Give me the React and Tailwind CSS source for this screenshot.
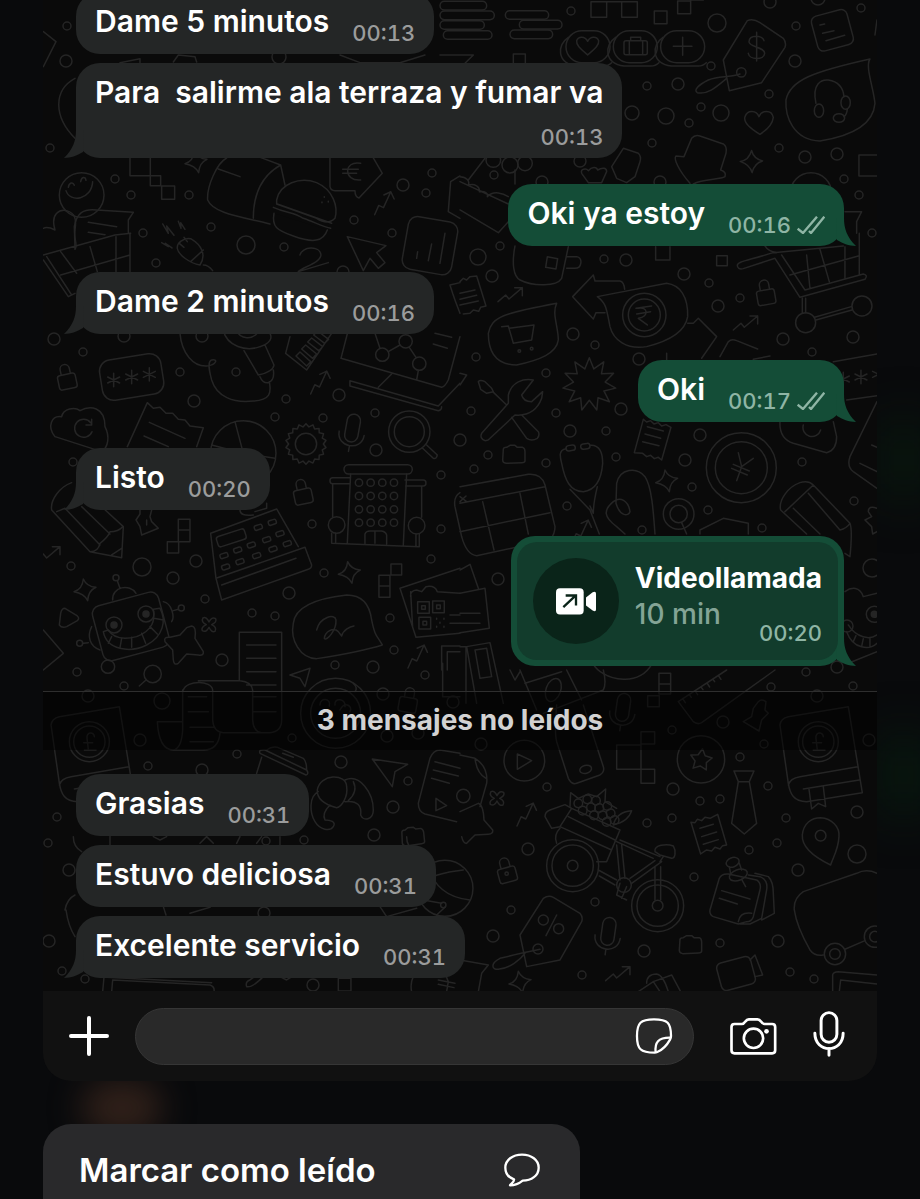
import { clsx } from 'clsx';

const messages = [
  { id: 1, text: 'Dame 5 minutos', time: '00:13' },
  { id: 2, text: 'Para  salirme ala terraza y fumar va', time: '00:13', stacked: true, tail: true },
  { id: 3, text: 'Oki ya estoy', time: '00:16', mine: true, tail: true },
  { id: 4, text: 'Dame 2 minutos', time: '00:16', tail: true },
  { id: 5, text: 'Oki', time: '00:17', mine: true, tail: true },
  { id: 6, text: 'Listo', time: '00:20', tail: true },
];

const unread = [
  { id: 7, text: 'Grasias', time: '00:31' },
  { id: 8, text: 'Estuvo deliciosa', time: '00:31' },
  { id: 9, text: 'Excelente servicio', time: '00:31', tail: true },
];

// x, y, radius
const dots = [
  [67, 26, 4], [66, 61, 6], [50, 148, 4], [115, 179, 4], [131, 195, 4], [189, 195, 4], [211, 227, 4], [246, 245, 9],
  [284, 247, 4], [143, 233, 4], [156, 263, 4], [432, 173, 4], [403, 185, 6], [426, 193, 4], [354, 220, 4], [392, 233, 4],
  [279, 57, 7], [343, 272, 6], [571, 11, 4], [717, 23, 9], [796, 26, 4], [861, 8, 4], [770, 2, 6], [818, -2, 7],
  [795, 61, 6], [711, 66, 4], [678, 84, 6], [647, 86, 4], [769, 94, 4], [701, 107, 4], [666, 116, 8], [721, 113, 8],
  [632, 113, 7], [689, 123, 4], [652, 143, 4], [805, 157, 6], [837, 154, 6], [779, 148, 4], [844, 179, 4], [859, 195, 4],
  [872, 233, 4], [494, 175, 4], [580, 161, 6], [542, 182, 6], [660, 182, 6], [500, 246, 4], [478, 257, 8], [492, 276, 6],
  [604, 259, 4], [626, 260, 6], [684, 274, 6], [709, 283, 4], [740, 298, 4], [718, 306, 6], [573, 334, 6], [783, 339, 6],
  [853, 337, 6], [54, 339, 6], [83, 352, 4], [124, 336, 6], [202, 336, 6], [180, 372, 4], [236, 372, 4], [194, 401, 6],
  [286, 399, 4], [275, 417, 4], [323, 418, 4], [339, 395, 6], [375, 413, 4], [376, 450, 6], [441, 475, 4], [73, 462, 4],
  [312, 524, 4], [441, 529, 4], [431, 559, 4], [324, 573, 4], [71, 566, 4], [142, 567, 9], [173, 578, 6], [196, 561, 6],
  [205, 599, 4], [289, 593, 6], [252, 613, 4], [275, 616, 4], [222, 660, 6], [390, 618, 4], [394, 650, 4], [335, 665, 4],
  [373, 667, 6], [595, 345, 4], [812, 352, 4], [476, 357, 4], [546, 373, 4], [639, 359, 6], [471, 411, 4], [556, 413, 4],
  [621, 409, 6], [570, 431, 6], [606, 431, 4], [460, 440, 6], [488, 455, 4], [474, 469, 4], [546, 463, 4], [616, 457, 4],
  [685, 460, 6], [700, 435, 6], [692, 487, 4], [708, 510, 4], [762, 528, 4], [802, 462, 4], [854, 501, 4], [567, 506, 4],
  [642, 530, 4], [498, 579, 6], [872, 568, 9], [847, 626, 6], [837, 667, 6], [806, 672, 4], [77, 672, 4], [124, 686, 4],
  [88, 696, 6], [162, 701, 8], [425, 675, 4], [383, 694, 6], [140, 740, 6], [292, 738, 4], [387, 736, 6], [418, 733, 6],
  [453, 702, 6], [237, 754, 4], [148, 766, 4], [202, 770, 6], [341, 762, 6], [408, 781, 4], [393, 807, 6], [374, 835, 6],
  [304, 840, 4], [266, 841, 4], [57, 817, 4], [48, 843, 4], [69, 870, 6], [49, 941, 6], [62, 971, 4], [85, 979, 4],
  [313, 985, 6], [264, 913, 6], [771, 687, 4], [853, 686, 4], [817, 696, 6], [723, 722, 6], [672, 730, 4], [764, 744, 4],
  [869, 740, 6], [481, 744, 6], [740, 757, 4], [768, 786, 4], [673, 789, 6], [700, 801, 4], [720, 799, 4], [547, 787, 4],
  [786, 818, 4], [672, 818, 4], [647, 823, 4], [857, 812, 6], [777, 843, 4], [749, 850, 4], [857, 854, 9], [798, 870, 6],
  [528, 849, 6], [694, 877, 4], [595, 902, 4], [511, 910, 4], [493, 936, 6], [644, 951, 6], [720, 943, 4], [778, 941, 6],
  [582, 975, 4], [790, 972, 4], [814, 979, 4],
];

const shapes = {
  sparkle: 'M-5-33Q5-10 33-8Q10 2 8 32Q-2 10-33 5Q-8-2-5-33Z',
  lock: 'M-19-12H19Q27-12 27-4V24Q27 32 19 32H-19Q-27 32-27 24V-4Q-27-12-19-12ZM-14-12V-28A14 14 0 0 1 14-28V-12',
  zig: 'M-38 20L-15 0L-5 12L35-22M12-22H35V2',
  mic: 'M-20-38A20 20 0 0 1 20-38V6A20 20 0 0 1-20 6ZM-38 0C-38 50 38 50 38 0M0 38V55',
  clover: 'M0-8Q8-25 20-18Q25-8 8 0Q25 8 18 20Q8 25 0 8Q-8 25-20 18Q-25 8-8 0Q-25-8-18-20Q-8-25 0-8Z',
  asterisk: 'M0-20V20M-18-9L18 9M-18 9L18-9',
  folder: 'M-30-14Q-30-20-20-20L-10-26H5L12-20H28Q35-17 35-7V20Q35 26 25 26L-22 28Q-32 26-32 18Z',
};

function Shape({ name, x, y, r = 0 }) {
  return <path d={shapes[name]} transform={`translate(${x} ${y}) rotate(${r})`} />;
}

function Star({ x, y, points, outer, inner, r = 0 }) {
  const coords = Array.from({ length: points * 2 }, (_, i) => {
    const radius = i % 2 ? inner : outer;
    const a = (Math.PI * i) / points + (r * Math.PI) / 180;
    return `${(x + radius * Math.sin(a)).toFixed(1)},${(y - radius * Math.cos(a)).toFixed(1)}`;
  });
  return <polygon points={coords.join(' ')} />;
}

function Circles({ list }) {
  return list.map(([x, y, r]) => <circle key={`${x}-${y}-${r}`} cx={x} cy={y} r={r} />);
}

function Book() {
  return (
    <>
      <path d="M960 165Q962 145 985 140L1165 110L1207 368L1040 395C1000 395 990 370 985 340L960 165M985 345Q990 325 1020 320L1193 290M1030 357L1198 330M1047 357L1055 417L1075 400L1097 410L1090 350" />
      <path d="M1090 200C1090 185 1065 185 1068 205L1072 240H1060H1095M1058 218H1085" />
      <Circles list={[[1075, 215, 60], [1075, 215, 47]]} />
    </>
  );
}

function Wallpaper() {
  return (
    <svg
      className="absolute inset-0 h-full w-full"
      viewBox="43 0 834 992"
      preserveAspectRatio="xMidYMin slice"
      fill="none"
      stroke="#252525"
      strokeLinecap="round"
      strokeLinejoin="round"
      aria-hidden="true"
    >
      <g strokeWidth="1.5">
        <Circles list={dots} />
      </g>

      {/* top left */}
      <g transform="translate(40 0) scale(.3333)" strokeWidth="4.5">
        <path d="M105 235C40 270 40 350 105 415M10 95L48 125L10 200M900 165L960 188H1080L1155 165M400 186L415 165L465 170L470 186M240 188L300 176V188" />
        <circle cx="125" cy="585" r="67" />
        <path d="M78 572C90 610 155 600 158 545M85 562c2-14 14-18 18-6M122 545c2-14 14-18 16-4" />
        <path d="M10 685C20 680 35 685 45 690C30 640 60 628 80 632C105 640 110 655 105 690C100 720 115 735 105 748" />
        <path d="M270 474V527H331V474M331 527H362V557H331ZM365 558H404V598H365Z" />
        <Shape name="sparkle" x={468} y={486} />
        <path d="M560 474C530 490 500 560 503 600C520 640 600 650 690 672M640 655C640 590 660 530 722 495L735 555M655 470L722 495M535 507L600 530" />
        <path d="M710 600C720 550 780 530 830 548C880 570 895 620 885 655C870 670 850 668 830 655L710 612ZM700 622C740 640 760 635 790 655C820 665 850 680 872 685M712 612L875 670M702 640C695 680 710 690 760 708C820 730 850 725 862 690M853 590v2M846 606v2M865 604v2" fill="#0a0a0a" />
        <path d="M870 474V560Q872 572 885 572H945Q945 590 957 594L1027 520L1000 474M962 490C910 480 910 545 962 540M908 508H955M908 520H950" />
        <path d="M922 710L1038 737L1010 758L1035 788L1015 805L990 775L970 812Z" />
        <Shape name="zig" x={1030} y={610} r={-25} />
        <path d="M412 745C410 730 430 712 452 716C485 735 500 765 480 795C450 790 415 765 412 745M452 785L490 750M418 730L432 742M432 712L442 725M490 795Q505 795 518 812" />
        <path d="M368 672L385 700L380 678L402 706M415 664L423 685L422 668L435 688M365 728L385 740L376 730L396 744" />
        <path d="M10 765L225 705L272 700M10 780L85 890L105 880M20 770L95 885M270 700V815M228 710V815M62 755L110 820M150 740L172 815M62 825L270 765M105 745L103 680C110 640 130 625 170 630L280 637L265 660V700M145 667L230 680M145 697L195 704" />
        <path d="M780 765C785 740 840 735 843 765C840 790 790 800 775 815L865 788" />
        <rect x="1095" y="657" width="150" height="160" rx="28" transform="rotate(10 1170 737)" />
        <path d="M1130 775l3-20M1165 782l10-50M1200 790l15-90M1260 528L1232 545L1225 635L1260 655M1260 848L1230 855L1238 880L1245 900L1260 940" />
      </g>

      {/* top right */}
      <g transform="translate(460 0) scale(.3333)" strokeWidth="4.5">
        <rect x="-60" y="4" width="140" height="26" rx="13" />
        <rect x="-60" y="33" width="163" height="26" rx="13" />
        <rect x="-60" y="62" width="133" height="26" rx="13" />
        <rect x="-50" y="92" width="146" height="26" rx="13" />
        <rect x="136" y="32" width="130" height="26" rx="13" />
        <rect x="178" y="61" width="128" height="26" rx="13" />
        <rect x="150" y="90" width="128" height="26" rx="13" />
        <path d="M393 5H440V52H393ZM485 5H532V52H485ZM583 33H621V71H583ZM653 3H692V41H653ZM440 5H485M692 0H730M160 198V162H196V198M587 740V780H630V740M770 767H802V797H770ZM1251 465H1197V528H1251M-60 165L40 165L15 190" />
        {[0, 142, 284].map((dx) => (
          <g key={dx} transform={`translate(${dx} 0)`}>
            <rect x="318" y="92" width="132" height="96" rx="48" />
            <path d="M325 112C290 135 290 190 350 198H430Q445 198 455 188" />
          </g>
        ))}
        <path d="M383 165C360 145 348 135 350 122C355 108 375 108 383 124C391 108 411 108 416 122C418 135 406 145 383 165Z" />
        <path d="M498 122H556Q562 122 562 128V158Q562 164 556 164H498Q492 164 492 158V128Q492 122 498 122ZM508 122V164M548 122V164M512 122V112H542V122M668 112V166M640 139H696" />
        <path d="M862 62Q880 55 900 68L970 115Q980 128 975 142L905 248L808 272L790 180ZM840 222C800 235 780 225 745 240C715 255 700 270 712 278C740 285 765 265 800 235M890 97V183M912 122C908 105 868 102 867 125C866 142 914 140 914 160C912 182 868 180 865 160" />
        <circle cx="844" cy="217" r="14" />
        <rect x="1062" y="37" width="110" height="108" rx="18" transform="rotate(-15 1117 90)" />
        <path d="M1080 75l14-3M1088 100l34-8M1098 122l56-16M1251 60L1245 105" />
        <path d="M1230 177C1215 200 1240 260 1245 310C1240 380 1160 410 1080 423C1000 420 975 350 978 300C990 240 1060 215 1230 177ZM1068 310C1055 250 1085 238 1105 240C1135 245 1150 265 1152 290M1162 328Q1160 345 1152 350" />
        <ellipse cx="1077" cy="332" rx="14" ry="20" />
        <ellipse cx="1157" cy="308" rx="14" ry="20" />
        <ellipse cx="1137" cy="354" rx="17" ry="13" />
        <path d="M900 403C870 385 850 365 855 350C862 328 890 330 897 350C905 330 935 328 940 352C938 372 920 390 900 403Z" />
        <Shape name="sparkle" x={874} y={485} r={10} />
        <path d="M695 415Q705 403 720 408L790 432Q802 440 798 460L782 510Q800 515 795 530C780 540 730 535 700 552M695 415L672 470L648 468C640 475 655 510 690 550" />
        <path d="M490 445L535 460Q545 470 540 485L525 530L500 548L470 535L455 500ZM365 520C360 505 380 505 385 512C395 500 410 500 413 510C430 500 440 505 440 515L425 548H385Z" />
        <path d="M0 545L145 612M0 630L115 698L145 665M25 540L75 475M0 530C20 530 30 545 25 555C45 550 60 560 58 575C75 572 85 580 82 590C100 570 130 580 145 590M165 510V552" />
        <Circles list={[[100, 480, 22], [150, 495, 24], [195, 490, 22], [1053, 580, 62], [1037, 968, 30], [1206, 918, 30], [553, 945, 65], [553, 945, 48], [178, 1053, 4], [215, 1046, 4]]} />
        <path d="M832 795C835 785 850 785 940 758L1150 738M832 795Q832 810 850 806L945 775L1020 892L1215 838Q1225 825 1210 822L1035 870L965 765M990 825L1195 768M1080 748L1108 845M1040 765L1050 865M1155 740V835M1198 700V825M1155 635H1205L1190 665V700M1027 895V940M1037 895V938M1068 960L1176 930M1064 952L1174 920M915 738Q925 755 950 758" />
        <Shape name="lock" x={917} y={882} r={-10} />
        <Shape name="zig" x={152} y={885} />
        <Shape name="zig" x={858} y={970} />
        <path d="M165 738C155 790 160 830 180 840C220 860 290 860 305 835L325 740M320 770H350C370 775 365 805 345 805H320M262 770L293 776L288 807L257 802Z" />
        <path d="M0 845L10 835L20 840L30 830L50 828L78 918L62 922L56 934L40 930L30 940L10 942M0 880L45 870M0 898L50 886M0 915L55 903" />
        <path d="M400 825L338 890L400 957L408 938H435M400 825L405 843H480Q492 845 494 868M683 970H700L715 955L770 1010L725 1075M620 1060V1100Q622 1108 635 1108H705" />
        <path d="M412 890L620 850C660 855 685 890 683 950C675 1000 620 1025 560 1040C500 1050 460 1020 450 980C440 930 440 910 412 890ZM528 925L575 918M530 942L572 935M535 925C562 918 570 950 535 955L562 975" />
        <path d="M85 1000C95 950 130 940 290 910C275 940 295 980 295 1020C290 1060 240 1080 170 1095C110 1095 85 1060 85 1000ZM125 980L145 978L160 1030L215 1020L222 975L148 985" />
      </g>

      {/* middle left */}
      <g transform="translate(40 330) scale(.3333)" strokeWidth="4.5">
        <Shape name="lock" x={80} y={145} r={-12} />
        <rect x="182" y="80" width="186" height="122" rx="34" transform="rotate(-9 275 141)" />
        <Shape name="asterisk" x={221} y={150} />
        <Shape name="asterisk" x={275} y={141} />
        <Shape name="asterisk" x={328} y={133} />
        <path d="M420 10C425 70 460 110 500 108C530 105 535 85 515 90C500 95 510 130 515 150C530 200 580 220 640 213C690 210 695 190 688 155M612 62L655 135Q700 125 702 105L675 45M660 140Q668 160 685 158Q705 150 700 120M550 0C560 50 620 65 660 50C690 40 698 25 690 10M590 0C600 30 640 30 655 5" />
        <path d="M750 20L737 70L800 120L875 10M768 78L800 108L812 95L780 66ZM785 57L818 85L830 72L797 45ZM803 36L836 62L848 50L815 24ZM821 15L854 40L866 28L833 3Z" />
        <path d="M925 0L903 85L1205 172Q1215 170 1225 150L1260 20M930 152L1195 228L1260 160M930 152V168L1195 242Q1205 240 1205 230M1055 132L1015 172M1005 10L1020 55M1045 65L1080 45M1108 52L1128 82M1135 122L1130 150M1185 10L1235 22M1180 42L1222 55" />
        <Circles list={[[1027, 74, 20], [1097, 34, 20], [1138, 101, 20], [610, 370, 98], [798, 342, 32], [1108, 305, 62], [1108, 305, 45], [890, 585, 25], [1130, 587, 25]]} />
        <Shape name="zig" x={838} y={158} r={-25} />
        <path d="M45 320C20 290 35 255 65 260C70 235 105 230 120 242C150 225 195 230 195 290C210 320 205 350 185 365ZM152 278A27 27 0 1 0 156 305M155 268V285H138" />
        <path d="M262 350L322 218L340 235L360 232L378 250L398 250L415 268L435 270L450 288L490 293L470 350M328 277L435 325M312 318L385 350M585 275L610 370L705 385M515 345L610 370" />
        <Star x={798} y={342} points={18} outer={61} inner={52} />
        <Shape name="mic" x={935} y={310} r={10} />
        <path d="M1148 355L1180 385Q1190 388 1192 375L1160 345" />
        <rect x="912" y="404" width="205" height="28" rx="14" />
        <path d="M932 443H878Q870 443 870 452Q870 461 878 461H930M1095 450H1150Q1158 450 1158 459Q1158 468 1150 468H1097M932 432L922 640M1100 432L1090 645M878 462V562M1145 468V562M875 610V640L1138 650V612M1128 612V648M887 610V640M975 640V612Q978 603 990 603H1025Q1037 605 1040 615V642M1005 605V640" />
        {[0, 1, 2, 3].map((row) => (
          <Circles key={row} list={[0, 1, 2, 3].map((col) => [957 + col * 35, 458 + row * 40, 11])} />
        ))}
        <Shape name="lock" x={788} y={490} r={-12} />
        <path d="M95 458C60 470 30 510 35 540L150 665L245 683L250 590L190 535M50 545L75 535L180 645M125 530L210 612M150 665Q175 665 180 640Q205 620 210 605Q235 605 248 590M215 675L245 655" />
        <path d="M300 540V552L288 570L300 590L305 615L355 595L335 575L330 560L335 540M320 570V585" />
        <path d="M415 568H450V600H415ZM415 600H450V635H415ZM382 635H416V669H382ZM1053 702H1085V735H1053ZM1017 736H1050V768H1017ZM1017 768H1050V802H1017Z" />
        <path d="M512 610L710 537L775 650M512 610L528 745L795 652L815 705Q815 715 805 718L545 810L528 745M545 765L768 685M600 540Q600 560 640 555M680 520V535L645 545" />
        <rect x="530" y="608" width="88" height="32" rx="8" transform="rotate(-18 573 624)" />
        {[[655, 592], [697, 577], [552, 677], [593, 660], [634, 645], [680, 629], [720, 611], [557, 711], [600, 695], [650, 677], [699, 657], [742, 641]].map(([x, y]) => (
          <rect key={x} x={x - 12} y={y - 7} width="24" height="14" rx="5" transform={`rotate(-18 ${x} ${y})`} />
        ))}
        <Shape name="sparkle" x={135} y={780} />
        <Shape name="sparkle" x={928} y={728} />
        <Shape name="zig" x={25} y={672} />
        <path d="M75 835Q65 835 62 850L58 885Q65 895 80 890L112 872Q120 865 112 858Z" />
        <rect x="170" y="805" width="205" height="170" rx="25" transform="rotate(-15 270 890)" />
        <Circles list={[[222, 885, 24], [318, 852, 24], [228, 743, 9], [424, 834, 9], [119, 940, 9], [204, 1010, 20]]} />
        <g fill="#252525">
          <Circles list={[[222, 885, 9], [318, 852, 9]]} />
        </g>
        <path d="M190 905C200 960 270 970 320 945C370 920 380 870 360 835L340 838C345 870 340 900 290 920C250 930 220 925 205 900ZM215 920l-10 20M245 925l-5 28M275 922v30M305 910l12 30M330 890l22 22M342 865l28 5M232 752L240 775M218 810C215 770 270 760 288 790M370 815C395 820 405 860 395 875M400 842L415 838M155 890C140 920 150 950 180 960M130 940L145 938" />
        <path d="M455 888Q470 890 465 925L490 965Q492 978 475 975L440 972L415 1000Q402 1008 400 990L398 960L375 935Q370 920 390 922L420 915L440 893Z" fill="#0a0a0a" />
        <Shape name="clover" x={507} y={884} />
        <path d="M598 1020V907H725V1020M620 945H708M620 985H708M10 900L70 970L10 1020" />
        <path d="M760 880C765 830 830 805 920 795C970 795 990 830 995 870C1005 920 1010 915 1027 945C980 960 900 975 830 986C780 985 750 930 760 880ZM830 900C840 860 885 850 888 870C890 900 860 935 853 925C855 905 880 890 895 905L905 918C910 900 930 890 942 888" />
        <Shape name="zig" x={1130} y={980} r={-25} />
        <path d="M1080 775L1260 715M1080 775L1128 922L1260 910M1112 785L1118 892M1112 800Q1110 782 1130 780L1145 785L1158 770Q1185 765 1192 785L1260 790M1133 815H1168V850H1133ZM1178 813H1213V848H1178ZM1137 862H1172V897H1137ZM1145 827H1156V838H1145ZM1190 825H1201V836H1190ZM1149 874H1160V885H1149ZM1190 865v3M1212 865v3M1200 877v3M1190 889v3M1212 889v3M1230 855H1260M1230 880H1260M1205 1020V948H1260M1222 1020V965H1260M1260 488Q1240 500 1245 530L1265 620" />
      </g>

      {/* middle right */}
      <g transform="translate(460 330) scale(.3333)" strokeWidth="4.5">
        <path d="M0 130L20 135L0 165M55 155Q60 148 75 155L95 175L100 185L80 190L62 178ZM98 185L140 225M65 310Q58 325 75 332Q85 332 90 325L165 255C200 258 230 245 245 205L248 185L215 215Q190 215 185 195L220 150C190 145 155 155 145 195V220ZM155 262L200 325Q215 335 232 325Q240 315 235 305L185 255" />
        <Star x={388} y={163} points={11} outer={80} inner={48} />
        <Shape name="folder" x={160} y={372} />
        <path d="M550 268L560 276L572 272L582 282L595 278L605 288L618 284L633 292L605 390L595 382L583 386L572 376L560 380L548 370L523 368ZM562 290L610 303M555 312L602 325M548 335L597 347" />
        <rect x="318" y="346" width="28" height="16" rx="8" transform="rotate(-8 332 354)" />
        <rect x="362" y="341" width="28" height="16" rx="8" transform="rotate(-8 376 349)" />
        <path d="M318 356C295 360 300 380 305 400C315 450 330 485 370 485C410 480 425 440 428 400C428 370 420 345 392 346M330 478L390 540L418 612M412 470Q400 520 400 550L390 528M585 612C580 540 575 470 555 440C530 410 480 415 470 460L468 520C480 560 505 560 510 545C505 510 480 500 460 515C430 540 430 560 470 590L495 612" />
        <Shape name="sparkle" x={620} y={453} />
        <Circles list={[[844, 413, 105], [844, 413, 78], [656, 552, 46], [656, 552, 26], [1243, 853, 24]]} />
        <path d="M835 368L845 410L880 385M845 410L830 452M820 403L868 423M815 415L862 435M665 578L680 612" />
        <path d="M0 470L205 433Q245 430 255 465L285 590Q285 612 270 630L50 677Q20 675 5 620M0 520L255 470M68 515L102 660M180 490L205 612M0 605L270 548M0 500L20 515M0 515L18 498" />
        <Shape name="zig" x={362} y={605} r={-25} />
        <path d="M1020 458C985 470 955 510 962 540L1040 612M1020 458Q1045 450 1060 465L1170 580Q1178 600 1170 680L1155 670M975 545L1060 465M1000 535L1080 612M1045 490L1140 600Q1160 595 1170 580" />
        <path d="M780 80L805 35Q815 25 830 32L893 57M880 88L930 78M1120 95L1251 72M1160 210L1251 197M960 275C958 310 970 330 1000 340L1100 368Q1130 360 1130 320L1120 275M1030 285A27 27 0 1 0 1082 300M1251 215L1170 380Q1160 410 1180 425L1251 475M1200 400L1251 425M1235 345L1251 352M720 612V600L790 565L865 580V612M1251 535Q1225 525 1225 545L1235 560L1215 570L1235 590L1238 612L1251 605" />
        <Shape name="asterisk" x={1150} y={147} />
        <Shape name="asterisk" x={1203} y={141} />
        <Shape name="asterisk" x={1256} y={133} />
        <path d="M1155 785C1175 770 1200 770 1210 800L1251 790M1160 905C1180 960 1230 960 1251 940M1165 885C1190 925 1230 930 1251 915M1180 935l8-18M1205 950l5-24M1230 950v-24M1165 1000L1251 965M0 720L30 703L55 775M0 790L75 775L88 895L0 908M0 850H60M0 880H60M20 950L90 938L130 1120M20 950L50 1120M45 960L80 955L95 1040L60 1045ZM0 950H18V1120" />
        <circle cx="1243" cy="853" r="9" fill="#252525" />
        <path d="M400 1003C410 1020 440 1045 490 1048C530 1050 560 1030 575 1003" />
      </g>

      {/* bottom left */}
      <g transform="translate(40 670) scale(.3333)" strokeWidth="4.5">
        <path d="M430 60C440 30 515 30 518 60V150Q520 185 550 188H690Q725 185 725 150V0M475 32H600Q635 35 638 60V150Q640 185 665 188M428 60V180Q425 235 400 240H490Q535 240 540 190M352 155H425M352 155C355 210 370 240 400 240M445 80H500M445 125H505M450 172H520M450 215H520M620 5H708M620 45H708M640 80H708M640 125H708M598 0V30M318 30L298 48M750 15L810-5M750 15L780 25L795 50L810-5" />
        <Circles list={[[338, 12, 26], [887, 130, 105], [887, 130, 75], [1215, 655, 84], [1210, 705, 8]]} />
        <path d="M840 105C840 80 875 85 868 108M885 105C880 82 920 85 915 110M900 120C915 90 940 110 930 125M1208-20V80H1260M940 40Q955 55 945 65" />
        <Shape name="lock" x={1105} y={95} r={10} />
        <path d="M660 250Q655 238 675 240L800 300Q808 312 798 315ZM680 240Q700 225 720 235L790 265Q800 275 800 298M665 262L650 310M728 250L760 262M997 267L1103 283L1065 305L1057 350Z" />
        <path d="M832 360C840 310 920 310 920 350C925 380 905 410 890 413C860 405 830 390 832 360ZM835 365C805 380 810 430 825 455C840 480 870 485 880 470C890 455 870 450 855 450Q845 430 870 405M915 330C960 310 1000 370 1000 420C1000 450 970 455 962 435C965 410 955 390 915 395M940 335Q955 365 925 392" />
        <path d="M1260 250L1200 240Q1180 240 1170 265L1135 400Q1135 425 1155 432L1250 455M1185 275L1260 295M1180 300L1255 318M1175 325L1228 340M1188 385V422L1220 407Z" />
        <Shape name="folder" x={1117} y={498} r={-6} />
        <path d="M1165 590Q1190 680 1290 690M1140 640Q1180 610 1270 600M1205 700L1150 690M1215 712L1190 735M1100 500Q1100 530 1125 545M100 500Q100 530 125 545M210 495V525M340 500L360 510L380 500M480 520L500 500L520 520M600 500L590 520M650 520L665 500M720 500V525M75 720C80 690 95 680 105 675M78 720Q85 770 105 800M370 710L378 735M450 730L510 712M1020 710L1040 740L1130 715" />
        <path d="M188 965L192 922M215 965L218 930L510 945Q525 950 522 965M200 922L515 938M620 950Q615 935 630 930L650 915M620 950Q635 955 670 920M720 920L740 930L760 918M895 925H933V963H895ZM1115 965Q1110 940 1120 920M1215 910L1225 935L1220 965M1195 930L1245 940M1195 943L1242 953" />
      </g>

      {/* bottom right, the book shows again one tile to the left */}
      <g transform="translate(460 670) scale(.3333)" strokeWidth="4.5">
        <Book />
        <g transform="translate(-2187 0)">
          <Book />
        </g>
        <path d="M150 0L165 30L180 5M180 0L230 120M195 40L305 5M290 105Q283 190 290 215L325 325Q335 345 350 340L420 315Q435 305 430 290L370 105M320 0L365 90M250 130L430 60Q440 40 430 0" />
        <ellipse cx="377" cy="298" rx="18" ry="12" transform="rotate(-15 377 298)" />
        <ellipse cx="280" cy="60" rx="22" ry="36" transform="rotate(20 280 60)" />
        <Shape name="mic" x={487} y={128} r={8} />
        <Shape name="mic" x={443} y={800} r={8} />
        <path d="M597 10H632V42H597ZM597 42H632V72H597ZM563 77H598V110H563ZM470 225H543V298H470ZM543 185H584V222H543ZM543 298H584V340H543Z" />
        <path d="M655 95L800 0M655 95L700 155Q712 165 725 158L945 0M668 86l8 12M688 74l6 8M705 62l8 12M723 51l6 8M741 39l8 12M758 27l6 8M775 16l8 12" />
        <path d="M895 95Q905 85 918 95L915 120L925 130L905 150L897 183L850 155L875 140L880 115ZM172 252V298L215 272ZM822 303H882L868 335H835ZM835 335L815 460L853 492L890 460L868 335" />
        <Circles list={[[193, 272, 61], [723, 268, 71], [10, 378, 20], [338, 587, 78], [338, 587, 62], [338, 587, 16], [593, 707, 78], [593, 707, 62], [593, 707, 16], [492, 645, 22], [1082, 497, 16], [1125, 852, 32], [1125, 852, 16], [1245, 800, 32], [1245, 800, 16], [234, 837, 15], [250, 750, 15], [296, 776, 15], [140, 611, 5]]} />
        <Star x={723} y={270} points={5} outer={34} inner={18} r={8} />
        <Shape name="clover" x={111} y={385} />
        <Shape name="zig" x={197} y={434} r={-25} />
        <path d="M0 255L45 265Q85 290 80 340L60 410M45 265Q50 310 78 325M0 425L55 400Q70 405 72 450L98 480Q100 492 85 493L45 495L20 520Q10 522 5 500" />
        <path d="M330 410L332 368L355 385L385 372L410 380L437 357L435 395L470 415M460 465Q470 425 515 422Q505 455 460 465" />
        <Circles list={[[355, 400, 13], [382, 388, 13], [408, 392, 13], [368, 422, 13], [393, 412, 13], [418, 414, 13], [442, 408, 13], [402, 436, 13], [428, 436, 13], [452, 430, 13], [440, 456, 13], [464, 450, 13]]} />
        <path d="M255 440Q255 425 270 420L315 404L335 415L480 480L440 575H410M255 440L275 475L300 470L335 415M300 470L455 540M325 440L465 510M300 475Q280 495 290 520M470 515L580 565M480 510L600 560M485 525L495 625M470 525L480 630M510 625L585 572M515 640L605 575M585 590V690M602 590V690M415 600L470 630M418 618L465 645M480 640L470 675L500 690M500 650L485 685M585 545C580 525 620 520 640 528C650 545 645 565 635 565L600 555ZM600 575L610 560" />
        <path d="M693 457L705 458L712 448L725 452L735 442L750 445L773 433L800 525L788 527L780 537L765 532L755 543L740 540L722 552ZM720 475l40-12M725 500l45-14M730 523l45-14" />
        <path d="M1112 585C1060 560 1025 530 1027 495C1030 460 1055 443 1082 443C1115 445 1140 470 1137 500C1135 540 1120 560 1112 585Z" />
        <path d="M750 720L778 625Q785 610 805 612L890 630Q905 640 900 660L880 740Q875 755 860 755L835 762L760 740Q748 735 750 720ZM865 615L900 620Q925 630 920 660L905 745L870 762H840M885 610L925 620Q940 635 940 670L943 730L905 750M785 662L870 687M778 685L832 702M835 755Q840 725 875 730M808 590L812 612M838 580L845 600M845 628L857 650" />
        <ellipse cx="818" cy="577" rx="20" ry="14" transform="rotate(-20 818 577)" />
        <ellipse cx="835" cy="615" rx="28" ry="16" transform="rotate(-20 835 615)" />
        <path d="M1251 610C1230 600 1210 600 1190 610L1030 665Q1000 685 1003 720Q1010 770 1050 840Q1065 860 1090 855M1155 838L1215 812" />
        <Shape name="lock" x={140} y={605} r={-15} />
        <path d="M250 685Q265 675 280 682L360 730Q370 742 365 755L300 870L200 890L180 795ZM240 838Q160 855 120 865C90 880 95 900 115 898C150 895 180 870 195 850M290 735L258 797" />
        <Shape name="zig" x={475} y={912} />
        <Shape name="folder" x={690} y={823} />
        <rect x="775" y="868" width="105" height="85" rx="16" transform="rotate(-15 828 908)" />
        <path d="M870 870L885 855L908 915L885 920" />
        <Shape name="sparkle" x={180} y={937} />
        <path d="M0 870L85 885L65 910L55 965M535 965L580 935L635 915L662 965M560 940Q560 912 590 912Q610 915 625 965M580 935L600 965M1118 965V915Q1120 905 1135 905L1251 915M1138 965L1142 930L1251 942" />
      </g>
    </svg>
  );
}

function Tail({ mine }) {
  return (
    <svg
      className={clsx('absolute bottom-0 h-7 w-5', mine ? '-right-3 -scale-x-100 fill-[#144d37]' : '-left-3 fill-[#242626]')}
      viewBox="0 0 20 28"
      aria-hidden="true"
    >
      <path d="M12 0C12 11 9 19 0 28C7 28 14 25 19 22L20 0Z" />
    </svg>
  );
}

function Checks() {
  return (
    <svg className="h-[18px] w-7" viewBox="0 0 84 54" fill="none" stroke="#8fb5a5" strokeWidth="7" role="img" aria-label="Entregado">
      <path d="M2 38L18 51L60 2M36 45L42 51L82 2" />
    </svg>
  );
}

function Message({ text, time, mine, stacked, tail }) {
  return (
    <div
      className={clsx(
        'relative flex w-fit rounded-3xl px-[19px] pt-2 pb-2',
        stacked ? 'flex-col' : 'gap-[23px]',
        mine ? 'self-end bg-[#144d37]' : 'self-start bg-[#242626]'
      )}
    >
      {tail && <Tail mine={mine} />}
      <p className="pb-1 text-[30px] leading-[42px] font-semibold whitespace-pre text-white">{text}</p>
      <span
        className={clsx(
          'flex items-center gap-[6px] self-end text-[22px] leading-[26px] font-medium tabular-nums',
          stacked && 'mt-[7px]',
          mine ? 'text-[#8fb5a5]' : 'text-[#9b9c9c]'
        )}
      >
        {time}
        {mine && <Checks />}
      </span>
    </div>
  );
}

function CallCard() {
  return (
    <div className="relative mt-[26px] flex w-fit self-end rounded-3xl bg-[#144d37] p-[6px]">
      <Tail mine />
      <div className="relative flex gap-4 rounded-[20px] bg-[#123c2c] p-4">
        <div className="flex size-[86px] shrink-0 items-center justify-center rounded-full bg-[#0a2419]">
          <svg className="h-[27px] w-10" viewBox="0 0 120 80" fill="#fff" aria-hidden="true">
            <rect width="83" height="79" rx="12" />
            <path d="M90 28L110 12Q120 8 120 16V64Q120 72 110 67L90 52Z" />
            <path d="M22 57L57 24M29 22H60V52" fill="none" stroke="#0a2419" strokeWidth="7" />
          </svg>
        </div>
        <div className="flex flex-col pt-[2px]">
          <p className="text-[28px] leading-9 font-bold text-white">Videollamada</p>
          <p className="text-[28px] leading-9 font-medium text-[#84a496]">10 min</p>
          <span className="-mt-3 -mb-[2px] self-end text-[22px] leading-[26px] font-medium text-[#8fb5a5] tabular-nums">00:20</span>
        </div>
      </div>
    </div>
  );
}

function Composer() {
  return (
    <form className="relative flex h-[90px] items-center rounded-b-[28px] bg-[#111111] pr-8 pl-[26px]" onSubmit={(e) => e.preventDefault()}>
      <button type="button" aria-label="Adjuntar" className="shrink-0">
        <svg className="size-10" viewBox="0 0 40 40" stroke="#fff" strokeWidth="4" strokeLinecap="round">
          <path d="M20 2V38M2 20H38" />
        </svg>
      </button>
      <div className="ml-[26px] flex h-[57px] min-w-0 flex-1 items-center rounded-full border border-[#363636] bg-[#292929] pr-5 pl-6">
        <input type="text" aria-label="Mensaje" className="min-w-0 flex-1 bg-transparent text-[30px] text-white outline-none" />
        <button type="button" aria-label="Stickers">
          <svg className="h-9 w-[38px]" viewBox="0 0 112 110" fill="none" stroke="#fff" strokeWidth="7" strokeLinejoin="round">
            <path d="M58 106C15 106 4 95 4 55C4 15 15 4 56 4C98 4 108 15 108 55Q108 61 105 66C96 82 80 98 66 104Q62 106 58 106Z" />
            <path d="M61 105C58 75 68 59 107 60" />
          </svg>
        </button>
      </div>
      <button type="button" aria-label="Cámara" className="ml-9 shrink-0">
        <svg className="h-[37px] w-[47px]" viewBox="0 0 140 111" fill="none" stroke="#fff" strokeWidth="8">
          <path d="M13 18H35Q41 18 45 11Q50 4 56 4H82Q88 4 93 11Q97 18 103 18H126Q135 18 135 27V97Q135 106 126 106H13Q4 106 4 97V27Q4 18 13 18Z" />
          <circle cx="70" cy="61" r="29" />
          <circle cx="109" cy="40" r="7" fill="#fff" stroke="none" />
        </svg>
      </button>
      <button type="button" aria-label="Grabar audio" className="ml-9 shrink-0 pb-1">
        <svg className="h-[46px] w-8" viewBox="0 0 96 140" fill="none" stroke="#fff" strokeWidth="9" strokeLinecap="round">
          <rect x="24" y="5" width="48" height="90" rx="24" />
          <path d="M5 68C5 130 91 130 91 68M48 114V135" />
        </svg>
      </button>
    </form>
  );
}

export default function App() {
  return (
    <div className="relative flex min-h-screen flex-col overflow-hidden bg-[#090a0c] px-[43px] font-[Inter,sans-serif]">
      <div className="absolute top-[420px] -right-2 h-20 w-12 bg-[#06200f]/60 blur-xl" />
      <div className="absolute top-[735px] -right-2 h-20 w-12 bg-[#06200f]/70 blur-xl" />
      <div className="absolute top-[1080px] left-[82px] h-14 w-20 rounded-full bg-[#3a261d]/80 blur-lg" />

      <main className="relative">
        <section className="relative overflow-hidden bg-[#0a0a0a] pb-[13px]">
          <Wallpaper />
          <div className="relative -mt-2 flex flex-col px-[33px]">
            {messages.map((m, i) => (
              <div key={m.id} className={clsx('flex flex-col', i > 0 && (messages[i - 1].tail ? 'mt-[26px]' : 'mt-[9px]'))}>
                <Message {...m} />
              </div>
            ))}
            <CallCard />
          </div>

          <h2 className="relative mt-[25px] border-t border-[#2e2e2e] bg-black/50 pt-2 pb-[10px] text-center text-[28px] leading-10 font-bold text-[#d2d2d2]">
            3 mensajes no leídos
          </h2>

          <div className="relative mt-6 flex flex-col gap-[9px] px-[33px]">
            {unread.map((m) => (
              <Message key={m.id} {...m} />
            ))}
          </div>
        </section>
        <Composer />
      </main>

      <nav className="relative mt-[43px] flex w-[537px] max-w-full flex-1 flex-col rounded-t-[28px] bg-[#29292b]">
        <button type="button" className="flex items-center justify-between pt-6 pr-10 pl-9 text-left text-[33px] leading-[44px] font-semibold text-white">
          Marcar como leído
          <svg className="h-[34px] w-9" viewBox="0 0 108 100" fill="none" stroke="#fff" strokeWidth="7" strokeLinejoin="round" aria-hidden="true">
            <path d="M30 78C12 72 4 58 4 43C4 20 26 4 54 4C82 4 104 20 104 43C104 67 82 82 56 82C45 91 32 96 18 96C17 94 32 88 30 78Z" />
          </svg>
        </button>
      </nav>
    </div>
  );
}
